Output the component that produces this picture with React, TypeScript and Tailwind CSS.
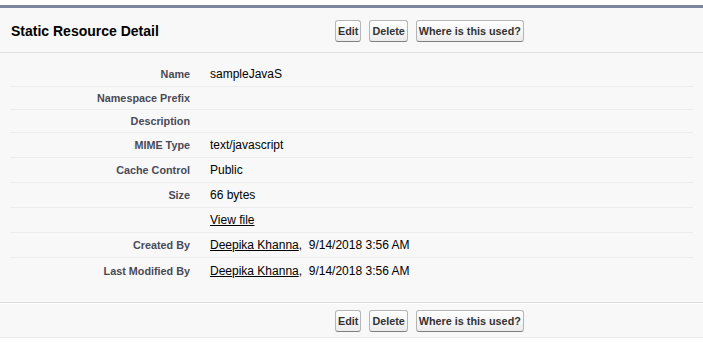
import React from 'react';

interface Field {
  label: string;
  value?: React.ReactNode;
}

function Btn({ children }: { children: React.ReactNode }) {
  return (
    <button className="h-[22px] px-[2px] rounded-[3px] border border-[#b5b5b5] border-b-[#7f7f7f] bg-gradient-to-b from-white to-[#ececec] text-[10.8px] font-bold text-[#333] leading-[12px]">
      {children}
    </button>
  );
}

function ButtonRow() {
  return (
    <div className="flex gap-2">
      <Btn>Edit</Btn>
      <Btn>Delete</Btn>
      <Btn>Where is this used?</Btn>
    </div>
  );
}

function UserStamp() {
  return (
    <span>
      <a className="underline text-black">Deepika Khanna</a>,&nbsp; 9/14/2018 3:56 AM
    </span>
  );
}

const fields: Field[] = [
  { label: 'Name', value: 'sampleJavaS' },
  { label: 'Namespace Prefix' },
  { label: 'Description' },
  { label: 'MIME Type', value: 'text/javascript' },
  { label: 'Cache Control', value: 'Public' },
  { label: 'Size', value: '66 bytes' },
  { label: '', value: <a className="underline text-black">View file</a> },
  { label: 'Created By', value: <UserStamp /> },
  { label: 'Last Modified By', value: <UserStamp /> },
];

export default function App() {
  return (
    <div className="min-h-[357px] bg-white pt-[5px] font-['Liberation_Sans',Arial,sans-serif]">
      <div className="border-t-[3px] border-[#7b869c] bg-[#f8f8f8]">
        {/* header */}
        <div className="h-[45px] pt-[2px] flex items-center border-b border-[#dfdfdf]">
          <div className="w-[335px] pl-[11px]">
            <h2 className="text-[14px] font-bold text-black leading-[16px]">Static Resource Detail</h2>
          </div>
          <ButtonRow />
        </div>

        {/* detail list */}
        <div className="pt-[9px] pb-[19px] px-[10px]">
          {fields.map((f, i) => (
            <div
              key={i}
              className={`flex items-center ${f.value ? 'min-h-[25px]' : 'min-h-[23px]'} ${
                i < fields.length - 1 ? 'border-b border-[#ececec]' : ''
              }`}
            >
              <div className="w-[190px] shrink-0 pr-[10px] text-right text-[10.8px] leading-[12px] font-bold text-[#4a4a56]">
                {f.label}
              </div>
              <div className="pl-[10px] text-[12px] leading-[14px] text-black">{f.value}</div>
            </div>
          ))}
        </div>

        {/* bottom buttons */}
        <div className="border-t border-[#dbdbdb]">
          <div className="h-[35px] border-t border-white border-b border-b-[#eaeaea] flex items-start pt-[6px]">
            <div className="w-[335px]" />
            <ButtonRow />
          </div>
        </div>
      </div>
    </div>
  );
}
